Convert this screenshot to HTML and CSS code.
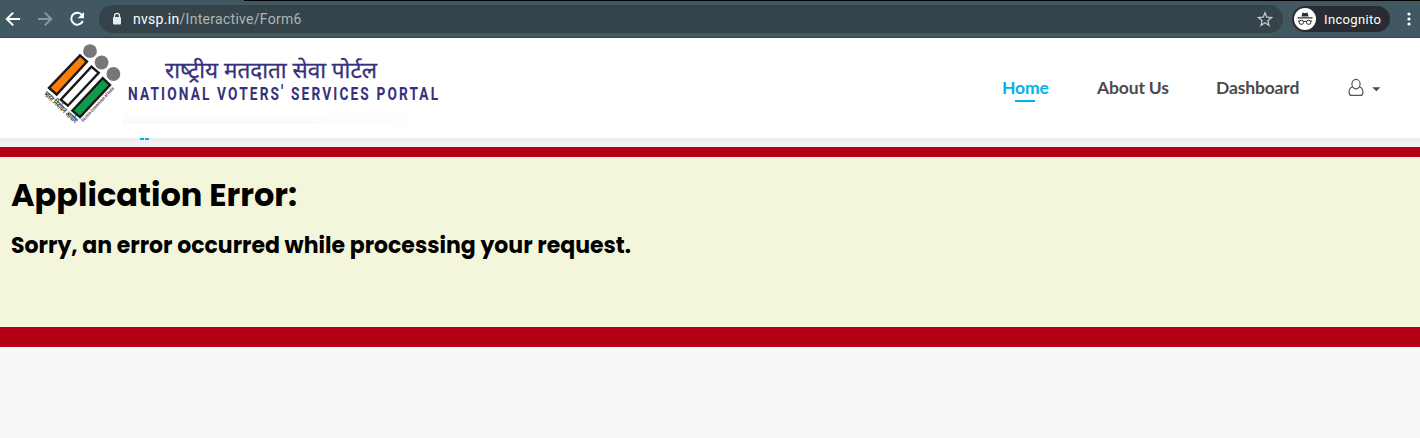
FILE: index.html
```html
<!DOCTYPE html>
<html lang="en">
<head>
<meta charset="utf-8">
<title>National Voters' Services Portal</title>
<link rel="stylesheet" href="styles.css">
</head>
<body>
<div class="browser">
  <svg class="nav-icons" width="99" height="38" viewBox="0 0 99 38" fill="none" stroke-width="2">
    <path d="M20 19H7M13.2 12.6L6.8 19l6.4 6.4" stroke="#fff"/>
    <path d="M38 19h13M44.8 12.6L51.2 19l-6.4 6.4" stroke="#89979d"/>
    <path d="M82.2 15.2A6 6 0 1 0 82.8 21" stroke="#fff"/>
    <path d="M84 12v6.3h-6.3z" fill="#fff"/>
  </svg>
  <div class="address">
    <svg width="10" height="14" viewBox="0 0 10 14"><path d="M2.5 6V3.8a2.5 2.5 0 0 1 5 0V6" fill="none" stroke="#e8eaeb" stroke-width="1.3"/><rect x="1" y="5" width="8" height="7.5" rx="1" fill="#e8eaeb"/></svg>
    <span class="url"><b>nvsp.in</b>/Interactive/Form6</span>
    <svg class="star" width="16" height="16" viewBox="0 0 16 16"><path d="M8 1.8l1.8 4.4 4.7.4-3.6 3.1 1.1 4.6L8 11.8l-4 2.5 1.1-4.6-3.6-3.1 4.700-.4z" fill="none" stroke="#c2c8ca" stroke-width="1.3"/></svg>
  </div>
  <div class="incognito">
    <svg width="22" height="22" viewBox="0 0 22 22"><circle cx="11" cy="11" r="11" fill="#fff"/><path d="M7.5 8.5l1-4 2.5.7 2.5-.7 1 4zM3.5 9.3h15v1.2h-15z" fill="#292c30"/><g fill="none" stroke="#292c30"><rect x="5.2" y="12.3" width="4.3" height="4" rx="1.8"/><rect x="12.5" y="12.3" width="4.3" height="4" rx="1.8"/><path d="M9.5 13.7q1.5-.8 3 0M4 13h1.5M16.5 13H18"/></g></svg>
    <span>Incognito</span>
  </div>
  <svg class="dots" width="6" height="16" viewBox="0 0 6 16" fill="#fff"><circle cx="3" cy="3" r="1.6"/><circle cx="3" cy="8" r="1.6"/><circle cx="3" cy="13" r="1.6"/></svg>
</div>
<header class="header">
  <svg class="logo" width="420" height="100" viewBox="30 38 420 100">
    <defs>
      <linearGradient id="fade" x1="0" y1="0" x2="0" y2="1"><stop offset="0" stop-color="#fff"/><stop offset="1" stop-color="#f9f9f9"/></linearGradient>
      <linearGradient id="side"><stop offset="0" stop-color="#fff" stop-opacity="0"/><stop offset=".6" stop-color="#fff" stop-opacity="0"/><stop offset="1" stop-color="#fff"/></linearGradient>
    </defs>
    <rect x="122" y="110" width="308" height="14" fill="url(#fade)"/>
    <rect x="122" y="110" width="308" height="14" fill="url(#side)"/>
    <g fill="#777"><circle cx="90" cy="51.2" r="6.9"/><circle cx="101.6" cy="62.5" r="6.9"/><circle cx="113.4" cy="74" r="6.9"/></g>
    <g stroke="#1c1718" stroke-width="2.4">
      <path d="M80 55.400L87 61.6 56.700 94.5 49 88z" fill="#fb7d0a"/>
      <path d="M91.4 66.700L98.700 72.9 67.900 105.700 60.800 99.6z" fill="#fff"/>
      <path d="M102.700 78.100L110 85 80 117.100 72.400 110.700z" fill="#0b9d4c"/>
    </g>
    <text class="seal" transform="translate(43.2 94.4) rotate(43)" textLength="43" lengthAdjust="spacingAndGlyphs" font-size="8">भारत निर्वाचन आयोग</text>
    <text class="seal" transform="translate(83 122.3) rotate(-47)" textLength="46" lengthAdjust="spacingAndGlyphs" font-size="4.5">Election Commission of India</text>
    <text class="hindi" x="165" y="78" textLength="212" lengthAdjust="spacingAndGlyphs">राष्&zwj;ट्रीय मतदाता सेवा पोर्टल</text>
    <text class="english" transform="translate(128 100) scale(.76 1)" textLength="408">NATIONAL VOTERS<tspan dy="-2">'</tspan><tspan dy="2"> SERVICES PORTAL</tspan></text>
  </svg>
  <nav class="menu">
    <a class="item active">Home</a>
    <a class="item about">About Us</a>
    <a class="item dash">Dashboard</a>
    <svg class="user" width="34" height="20" viewBox="0 0 34 20"><g fill="none" stroke="#555" stroke-width="1.2"><ellipse cx="8" cy="6.1" rx="4.1" ry="4.7"/><path d="M4.7 9C2.3 9.3 1.1 11.4 1.1 14.4q0 3 2.8 3h8.2q2.8 0 2.8-3C14.9 11.4 13.7 9.3 11.3 9"/></g><path d="M24.3 9.300h8l-4 4z" fill="#4b4b4b"/></svg>
  </nav>
</header>
<div class="strip"><i></i><i></i></div>
<main class="error">
  <h1>Application Error:</h1>
  <h2>Sorry, an error occurred while processing your request.</h2>
</main>
</body>
</html>
```
FILE: styles.css
```css
* { box-sizing: border-box; }
body { margin: 0; background: #f8f8f8; font-family: Lato, sans-serif; }
.browser {
  height: 38px; display: flex; align-items: center;
  background: linear-gradient(#000, #000) 244px 0 / 100% 1px no-repeat, #415862;
  border-bottom: 1px solid #34434a;
}
.nav-icons { flex: none; }
.address {
  width: 1184px; height: 28px; margin-top: 1px; padding: 0 10px 0 13px; border-radius: 14px;
  display: flex; align-items: center; background: #35444b;
}
.url {
  flex: 1; margin-left: 11px; color: #adb4b7;
  font: 14px Roboto, sans-serif; letter-spacing: .29px;
}
.url b { color: #fff; font-weight: 400; }
.incognito {
  width: 98px; height: 26px; margin: 1px 0 0 9px; padding: 0 2px; border-radius: 13px;
  display: flex; align-items: center; gap: 8px; background: #292c30;
  color: #fff; font: 400 13px Roboto, sans-serif; letter-spacing: .35px;
}
.incognito svg { flex: none; }
.dots { margin: 1px 0 0 16px; flex: none; }
.header {
  height: 100px; padding-left: 30px; background: #fff;
  display: flex; justify-content: space-between;
}
.logo { display: block; }
.seal { fill: #222; font-family: "Noto Sans", "Noto Sans Devanagari", sans-serif; font-weight: 600; }
.hindi { fill: #34327c; stroke: #34327c; stroke-width: .3px; font: 22px "Noto Sans Devanagari", "Noto Sans", sans-serif; }
.english { fill: #34327c; font: 700 18px Roboto, sans-serif; white-space: pre; }
.menu {
  width: 418px; padding-top: 38px; display: flex; align-items: flex-start;
  color: #4b4b4b; font-size: 17.5px; font-weight: 700; line-height: 24px;
}
.item { white-space: nowrap; letter-spacing: -.15px; }
.active { width: 46px; color: #00b2ef; }
.active::after {
  content: ""; display: block; width: 20px; height: 2px; margin: 0 auto; background: #00b2ef;
}
.about { width: 71px; margin-left: 49px; }
.dash { width: 84px; margin-left: 48px; }
.user { margin: 2px 0 0 48px; }
.strip {
  height: 9px; padding-left: 140px; display: flex; gap: 1px;
  background: linear-gradient(#ebebeb, #f4f4f4);
}
.strip i { width: 4px; height: 2px; background: #00b2ef; }
.error {
  height: 200px; padding: 20px 11px; background: #f4f6dc; color: #000;
  border-top: 10px solid #b40015; border-bottom: 20px solid #b40015;
  font-family: Poppins, Inter, sans-serif;
}
.error h1 { margin: 0; font-size: 32px; line-height: 36px; font-weight: 700; white-space: nowrap; }
.error h2 { margin: 18px 0 0; font-size: 22px; line-height: 30px; font-weight: 700; white-space: nowrap; }
```
